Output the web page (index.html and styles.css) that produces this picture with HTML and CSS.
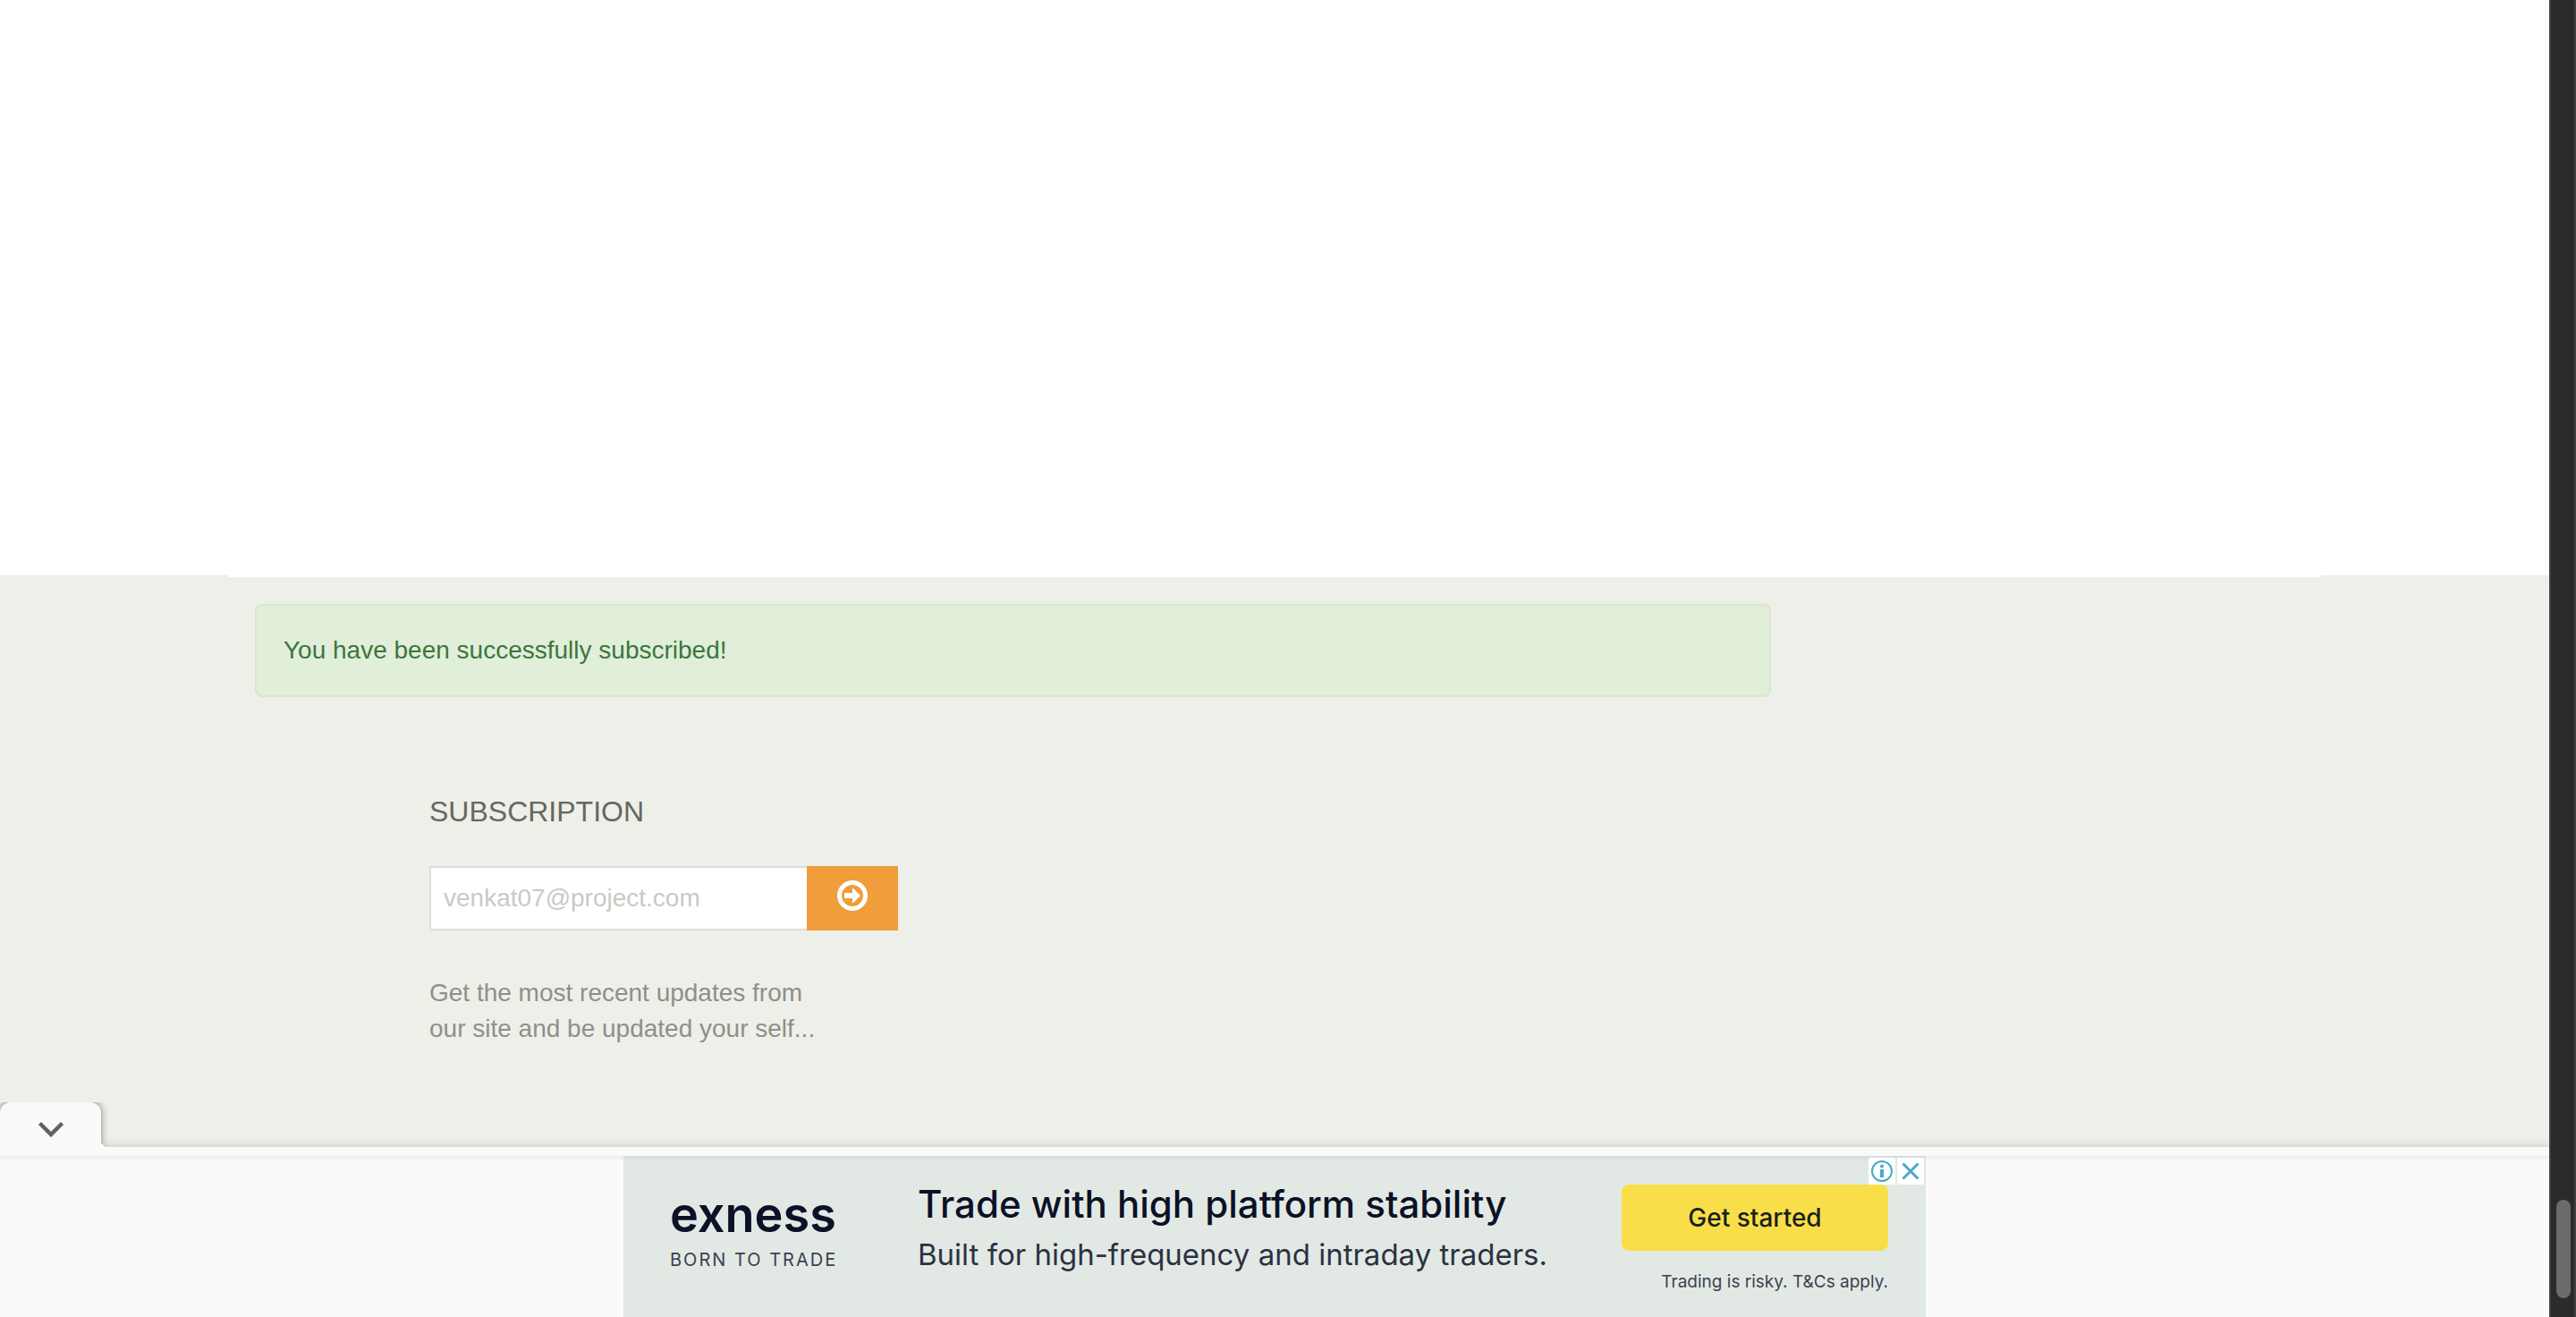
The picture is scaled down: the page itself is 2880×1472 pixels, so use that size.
FILE: index.html
```html
<!DOCTYPE html>
<html lang="en">
<head>
<meta charset="utf-8">
<title>Subscription</title>
<link rel="stylesheet" href="styles.css">
</head>
<body>
<div class="page">
  <main class="content"></main>
  <footer class="footer">
    <div class="container">
      <div class="alert-col">
        <div class="alert" role="status">You have been successfully subscribed!</div>
      </div>
      <section class="subscribe">
        <h2 class="subscribe-title"><label for="email">SUBSCRIPTION</label></h2>
        <form class="subscribe-form">
          <input class="subscribe-input" id="email" type="email" placeholder="venkat07@project.com">
          <button class="subscribe-button" type="button" aria-label="Subscribe">
            <svg width="34" height="34" viewBox="0 0 34 34" aria-hidden="true">
              <circle cx="17" cy="17" r="14.5" fill="none" stroke="#fff" stroke-width="5"/>
              <path d="M9 14h8V9.500q0-1.500 1-.500l7 7q1 1 0 2l-7 7q-1 1-1-.500V20H9q-1 0-1-1v-4q0-1 1-1z" fill="#fff"/>
            </svg>
          </button>
        </form>
        <p class="subscribe-note">Get the most recent updates from<br>our site and be updated your self...</p>
      </section>
    </div>
  </footer>
  <aside class="anchor">
    <button class="anchor-toggle" type="button" aria-label="Collapse">
      <svg width="30" height="18" viewBox="0 0 30 18" aria-hidden="true">
        <path d="M2.500 2.500L15 15L27.500 2.500" fill="none" stroke="#616161" stroke-width="4.500"/>
      </svg>
    </button>
    <div class="ad-slot">
      <div class="ad">
        <div class="brand">
          <div class="brand-name">exness</div>
          <div class="brand-tag">BORN TO TRADE</div>
        </div>
        <div class="pitch">
          <div class="pitch-title">Trade with high platform stability</div>
          <div class="pitch-text">Built for high-frequency and intraday traders.</div>
        </div>
        <div class="action">
          <button class="action-button" type="button">Get started</button>
          <div class="action-note">Trading is risky. T&amp;Cs apply.</div>
        </div>
        <div class="ad-choices">
          <button class="ad-choice" type="button" aria-label="Ad information">
            <svg width="30" height="30" viewBox="0 0 30 30" aria-hidden="true">
              <circle cx="15" cy="15" r="11" fill="none" stroke="#4aa8c9" stroke-width="2"/>
              <circle cx="15" cy="9.500" r="2" fill="#4aa8c9"/>
              <path d="M13 13h4v9h-4z" fill="#4aa8c9"/>
            </svg>
          </button>
          <button class="ad-choice" type="button" aria-label="Close ad">
            <svg width="30" height="30" viewBox="0 0 30 30" aria-hidden="true">
              <path d="M6.500 6.500L23.500 23.500M23.500 6.500L6.500 23.500" fill="none" stroke="#4aa8c9" stroke-width="3"/>
            </svg>
          </button>
        </div>
      </div>
    </div>
  </aside>
</div>
<div class="scrollbar"><div class="scrollbar-thumb"></div></div>
</body>
</html>
```
FILE: styles.css
```css
* { box-sizing: border-box; }

body {
  margin: 0;
  display: flex;
  min-height: 100vh;
  font: 28px/40px "Liberation Sans", Arial, sans-serif;
  background: #fff;
}

button { border: 0; padding: 0; font: inherit; cursor: pointer; }
svg { display: block; }

.page { flex: 1; min-width: 0; display: flex; flex-direction: column; }
.content { flex: 1; }

.footer { background: #eeefe9; }
.container {
  max-width: 2340px;
  margin: 0 auto;
  padding: 30px 0 112px;
  border-top: 2px solid #fff;
}
.alert-col { width: 75%; padding: 0 30px; }
.alert {
  padding: 30px;
  border: 2px solid #d9e7c8;
  border-radius: 8px;
  background: #e1eeda;
  color: #3c763d;
}

.subscribe { width: 584px; max-width: 100%; margin: 110px 0 0 8.333%; padding: 0 30px; }
.subscribe-title {
  margin: 0 0 43px;
  font-size: 32px;
  line-height: 36px;
  font-weight: 400;
  color: #666761;
}
.subscribe-form { display: flex; height: 72px; }
.subscribe-input {
  flex: 1;
  min-width: 0;
  padding: 0 14px;
  border: 2px solid #dddddb;
  border-right: 0;
  border-radius: 0;
  background: #fff;
  font: inherit;
  color: #555;
}
.subscribe-input::placeholder { color: #c9cac4; opacity: 1; }
.subscribe-button {
  width: 102px;
  display: flex;
  justify-content: center;
  padding-top: 16px;
  background: #f09d3b;
}
.subscribe-note { margin: 50px 0 0; color: #8e8f89; }

.anchor {
  position: relative;
  padding-top: 10px;
  background: #fafafa;
  box-shadow: 0 0 10px rgba(0, 0, 0, .18);
  clip-path: inset(-50px 0 0 0);
}
.anchor-toggle {
  position: absolute;
  left: 0;
  bottom: 100%;
  width: 113px;
  height: 50px;
  padding-top: 10px;
  display: flex;
  align-items: center;
  justify-content: center;
  border-radius: 12px 12px 0 0;
  background: #fafafa;
  box-shadow: 0 -1px 8px rgba(0, 0, 0, .45);
  clip-path: inset(-1px -10px 0 0);
}
.anchor-toggle::after {
  content: "";
  position: absolute;
  left: 100%;
  bottom: 0;
  width: 7px;
  height: 7px;
  background: radial-gradient(circle at 100% 0, transparent 7px, #fafafa 7px);
}
.ad-slot {
  display: flex;
  justify-content: center;
  background: linear-gradient(#ececec, #fafafa 6px);
}
.ad {
  position: relative;
  width: 1456px;
  height: 180px;
  padding: 0 42px 0 52px;
  display: flex;
  background: linear-gradient(#d5dcd7, #e2e9e4 6px);
  font-family: Inter, sans-serif;
  color: #0c1126;
  white-space: nowrap;
}
.brand { width: 277px; padding-top: 36px; }
.brand-name { font-size: 54px; line-height: 60px; font-weight: 600; }
.brand-tag { font-size: 20px; line-height: 24px; letter-spacing: 2px; margin-top: 8px; color: #3c4150; }
.pitch { flex: 1; padding-top: 30px; }
.pitch-title { font-size: 42px; line-height: 48px; font-weight: 500; }
.pitch-text { font-size: 33px; line-height: 40px; margin-top: 12px; color: #2c3142; }
.action { width: 298px; padding-top: 32px; text-align: right; }
.action-button {
  display: block;
  width: 100%;
  height: 74px;
  border-radius: 8px;
  background: #f8df49;
  font-size: 28px;
  font-weight: 500;
  color: #1b1f1c;
}
.action-note { font-size: 19px; line-height: 24px; margin-top: 23px; color: #3c4150; }
.ad-choices { position: absolute; top: 2px; right: 2px; display: flex; gap: 2px; }
.ad-choice { width: 30px; height: 30px; background: #fff; }

.scrollbar {
  width: 30px;
  padding: 0 4px 21px 6px;
  display: flex;
  align-items: flex-end;
  border: solid #414141;
  border-width: 0 2px;
  background: #2b2b2b;
}
.scrollbar-thumb { width: 16px; height: 110px; border-radius: 8px; background: #6b6b6b; }
```
